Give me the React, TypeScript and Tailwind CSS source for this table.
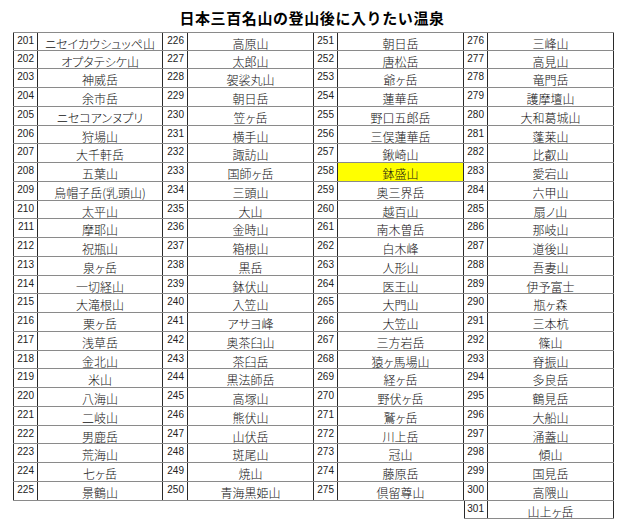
import React from 'react';

const groups: [number, string][][] = [
  [
    [201, 'ニセイカウシュッペ山'], [202, 'オプタテシケ山'], [203, '神威岳'], [204, '余市岳'], [205, 'ニセコアンヌプリ'],
    [206, '狩場山'], [207, '大千軒岳'], [208, '五葉山'], [209, '烏帽子岳(乳頭山)'], [210, '太平山'],
    [211, '摩耶山'], [212, '祝瓶山'], [213, '泉ヶ岳'], [214, '一切経山'], [215, '大滝根山'],
    [216, '栗ヶ岳'], [217, '浅草岳'], [218, '金北山'], [219, '米山'], [220, '八海山'],
    [221, '二岐山'], [222, '男鹿岳'], [223, '荒海山'], [224, '七ヶ岳'], [225, '景鶴山'],
  ],
  [
    [226, '高原山'], [227, '太郎山'], [228, '袈裟丸山'], [229, '朝日岳'], [230, '笠ヶ岳'],
    [231, '横手山'], [232, '諏訪山'], [233, '国師ヶ岳'], [234, '三頭山'], [235, '大山'],
    [236, '金時山'], [237, '箱根山'], [238, '黒岳'], [239, '鉢伏山'], [240, '入笠山'],
    [241, 'アサヨ峰'], [242, '奥茶臼山'], [243, '茶臼岳'], [244, '黒法師岳'], [245, '高塚山'],
    [246, '熊伏山'], [247, '山伏岳'], [248, '斑尾山'], [249, '焼山'], [250, '青海黒姫山'],
  ],
  [
    [251, '朝日岳'], [252, '唐松岳'], [253, '爺ヶ岳'], [254, '蓮華岳'], [255, '野口五郎岳'],
    [256, '三俣蓮華岳'], [257, '鍬崎山'], [258, '鉢盛山'], [259, '奥三界岳'], [260, '越百山'],
    [261, '南木曽岳'], [262, '白木峰'], [263, '人形山'], [264, '医王山'], [265, '大門山'],
    [266, '大笠山'], [267, '三方岩岳'], [268, '猿ヶ馬場山'], [269, '経ヶ岳'], [270, '野伏ヶ岳'],
    [271, '鷲ヶ岳'], [272, '川上岳'], [273, '冠山'], [274, '藤原岳'], [275, '倶留尊山'],
  ],
  [
    [276, '三峰山'], [277, '高見山'], [278, '竜門岳'], [279, '護摩壇山'], [280, '大和葛城山'],
    [281, '蓬莱山'], [282, '比叡山'], [283, '愛宕山'], [284, '六甲山'], [285, '扇ノ山'],
    [286, '那岐山'], [287, '道後山'], [288, '吾妻山'], [289, '伊予富士'], [290, '瓶ヶ森'],
    [291, '三本杭'], [292, '篠山'], [293, '脊振山'], [294, '多良岳'], [295, '鶴見岳'],
    [296, '大船山'], [297, '涌蓋山'], [298, '傾山'], [299, '国見岳'], [300, '高隈山'],
    [301, '山上ヶ岳'],
  ],
];

// column widths per group: [number, name]
const widths = [
  ['w-[25px]', 'w-[125px]'],
  ['w-[25px]', 'w-[126px]'],
  ['w-[24px]', 'w-[126px]'],
  ['w-[24px]', 'w-[126px]'],
];

const App = () => {
  return (
    <div className="w-[624px] h-[530px] bg-white text-black font-['Noto_Sans_CJK_JP',sans-serif]">
      <div className="h-[32px] pt-[10px] text-center text-[15px] leading-[16px] font-bold tracking-[0.6px]">
        日本三百名山の登山後に入りたい温泉
      </div>

      <div className="flex items-start pl-[13px]">
        {groups.map((rows, gi) => (
          <div key={gi} className="flex flex-col">
            {rows.map(([num, name], ri) => {
              const extra = ri >= 25;
              return (
                <div
                  key={num}
                  className={`flex ${extra ? 'h-[18px]' : ri % 4 === 1 ? 'h-[18px]' : 'h-[19px]'} border-b border-[#8a8a8a] ${ri === 0 ? 'border-t' : ''}`}
                >
                  <div
                    className={`${widths[gi][0]} shrink-0 border-r border-[#2a2a2a] ${gi === 0 || extra ? 'border-l' : ''} text-right pr-[3px] pt-[2px] text-[10px] leading-[11px] font-['Liberation_Sans',sans-serif] text-[#222]`}
                  >
                    {num}
                  </div>
                  <div
                    className={`${widths[gi][1]} shrink-0 border-r border-[#2a2a2a] flex items-center justify-center pt-[3px] text-[12px] leading-[13px] font-light text-[#111] [font-feature-settings:'palt'] whitespace-nowrap ${num === 258 ? 'bg-[#ffff00]' : ''}`}
                  >
                    {name}
                  </div>
                </div>
              );
            })}
          </div>
        ))}
      </div>
    </div>
  );
};

export default App;
